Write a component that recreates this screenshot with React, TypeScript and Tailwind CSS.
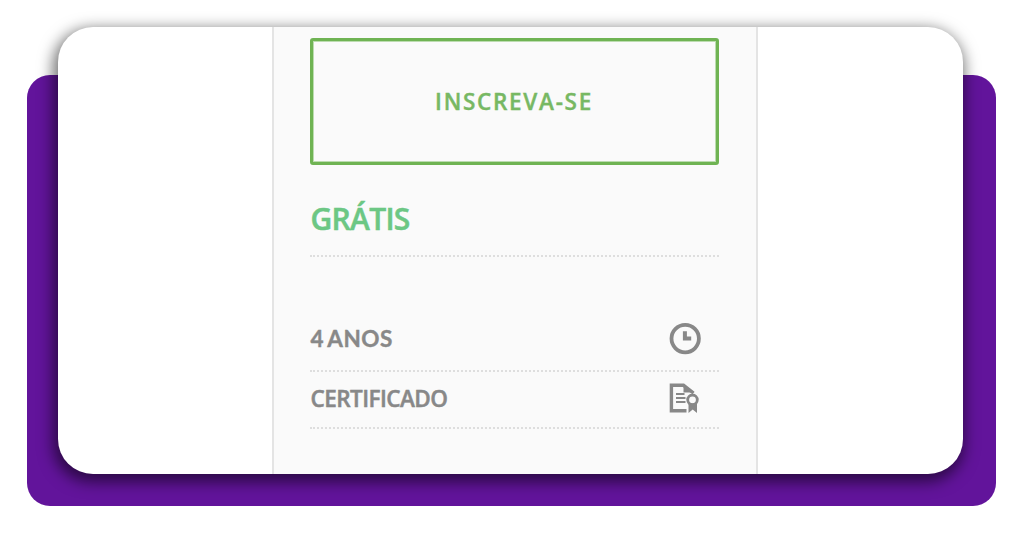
import type { ReactNode } from "react";

function ClockIcon() {
  return (
    <svg width="32" height="32" viewBox="0 0 32 32" fill="none" stroke="#888888">
      <circle cx="16.2" cy="15.6" r="13.7" strokeWidth="3.8" />
      <path d="M15.9 8.2V15.5H22.2" strokeWidth="4" />
    </svg>
  );
}

function CertificateIcon() {
  return (
    <svg width="32" height="32" viewBox="0 0 32 32" fill="none" stroke="#888888">
      <path d="M17.5 27.8H2.4V2.3H14.5L24.5 10" strokeWidth="3.4" />
      <path d="M14.5 2V9.4H25.5Z" fill="#888888" stroke="none" />
      <path d="M7 11H15.5M7 15H16.5M7 19H16.5" strokeWidth="1.8" />
      <circle cx="23.5" cy="16.8" r="4.8" strokeWidth="2.8" />
      <path d="M19.5 20.5V30L23.7 26.5L28 30V20.5Z" fill="#888888" stroke="none" />
    </svg>
  );
}

function Row({ label, icon, className }: { label: string; icon: ReactNode; className: string }) {
  return (
    <div className={`flex justify-between border-b-2 border-dotted border-[#dedede] pr-[18px] ${className}`}>
      <span>{label}</span>
      {icon}
    </div>
  );
}

export default function App() {
  return (
    <div className="h-[536px] w-[1024px] overflow-hidden bg-white pl-[27px] pt-[75px] font-['Open_Sans',sans-serif]">
      <div className="flex h-[431px] w-[969px] items-start rounded-[23px] bg-[#62149b] pl-[31px]">
        <main className="-mt-12 flex h-[447px] w-[905px] justify-center overflow-hidden rounded-[35px] bg-white shadow-[-2px_5px_15px_3px_rgba(0,0,0,0.56)]">
          <section className="mr-[-4px] ml-[4px] w-[486px] border-x-2 border-[#e4e4e4] bg-[#fafafa] px-[36px] pt-[11px]">
            <button className="flex h-[127px] w-[409px] items-center justify-center rounded-[3px] border-[3px] border-[#6fb353] pt-px text-[22.5px] font-semibold tracking-[1.7px] text-[#77b863] outline-1 -outline-offset-4 outline-[#bcdcb0] [-webkit-text-stroke:0.4px]">
              INSCREVA-SE
            </button>

            <div className="h-[92px] w-[409px] border-b-2 border-dotted border-[#dedede] pl-px pt-[32px] text-[30px] leading-[44px] font-semibold tracking-[-0.7px] text-[#6cc784] [-webkit-text-stroke:0.5px]">
              GRÁTIS
            </div>

            <div className="w-[409px] text-[22.5px] leading-[32px] font-semibold text-[#888888] [-webkit-text-stroke:0.5px]">
              <Row
                label="4 ANOS"
                icon={<ClockIcon />}
                className="h-[115px] pl-px pt-[66px] font-['Lato',sans-serif] font-bold tracking-[0.5px] [word-spacing:-2px] [-webkit-text-stroke:0.4px]"
              />
              <Row label="CERTIFICADO" icon={<CertificateIcon />} className="h-[57px] pl-px pt-[11px] tracking-[-0.55px]" />
            </div>
          </section>
        </main>
      </div>
    </div>
  );
}
